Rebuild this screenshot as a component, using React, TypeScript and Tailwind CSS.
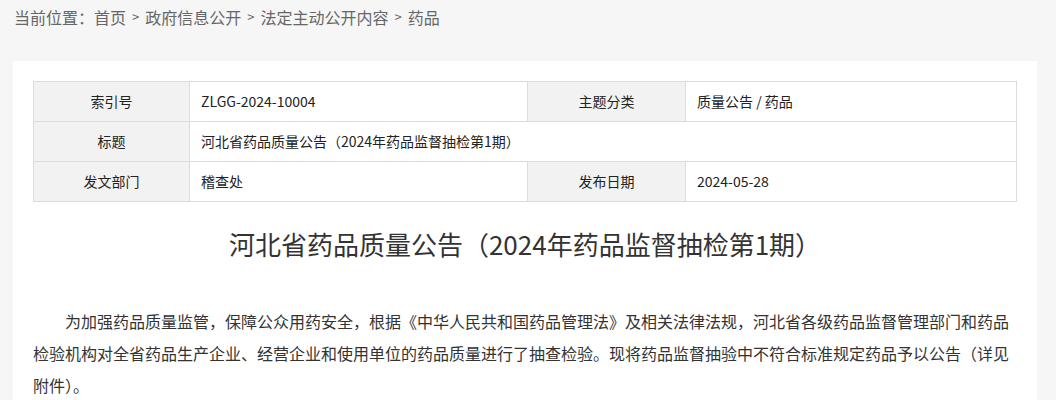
const rows = [
  [
    { label: "索引号", value: "ZLGG-2024-10004" },
    { label: "主题分类", value: "质量公告 / 药品" },
  ],
  [{ label: "标题", value: "河北省药品质量公告（2024年药品监督抽检第1期）" }],
  [
    { label: "发文部门", value: "稽查处" },
    { label: "发布日期", value: "2024-05-28" },
  ],
]

const crumbs = ["当前位置：首页", "政府信息公开", "法定主动公开内容", "药品"]

export default function App() {
  return (
    <div
      className="min-h-[400px] bg-[#f6f6f6] text-[#333]"
      style={{ fontFamily: '"Noto Sans CJK SC", "Noto Sans", sans-serif' }}
    >
      <div className="flex h-[33px] items-center pl-[14px] text-[16px] text-[#666]">
        {crumbs.map((c, i) => (
          <span key={i} className="flex items-center">
            {i > 0 && <span className="px-[6px] text-[13px]">&gt;</span>}
            {c}
          </span>
        ))}
      </div>

      <div className="ml-[13px] mr-[19px] mt-[28px] bg-white px-[20px] pt-[20px] pb-[10px]">
        <table className="w-full table-fixed border-collapse text-[14px] text-[#222]">
          <colgroup>
            <col className="w-[156px]" />
            <col className="w-[338px]" />
            <col className="w-[158px]" />
            <col />
          </colgroup>
          <tbody>
            {rows.map((row, i) => (
              <tr key={i} className="h-[40px]">
                {row.map((cell) => (
                  <Cell key={cell.label} label={cell.label} value={cell.value} wide={row.length === 1} />
                ))}
              </tr>
            ))}
          </tbody>
        </table>

        <h1 className="mt-[24px] text-center text-[26px] leading-[36px] text-[#333]">
          河北省药品质量公告（2024年药品监督抽检第1期）
        </h1>

        <p className="mt-[43px] indent-[32px] text-[16px] leading-[32px] text-[#333]">
          为加强药品质量监管，保障公众用药安全，根据《中华人民共和国药品管理法》及相关法律法规，河北省各级药品监督管理部门和药品
          <br />
          检验机构对全省药品生产企业、经营企业和使用单位的药品质量进行了抽查检验。现将药品监督抽验中不符合标准规定药品予以公告（详见
          <br />
          附件）。
        </p>
      </div>
    </div>
  )
}

function Cell({ label, value, wide }: { label: string; value: string; wide: boolean }) {
  return (
    <>
      <td className="border border-[#dcdcdc] bg-[#f2f2f2] text-center">{label}</td>
      <td colSpan={wide ? 3 : 1} className="border border-[#dcdcdc] px-[11px]">
        {value}
      </td>
    </>
  )
}
